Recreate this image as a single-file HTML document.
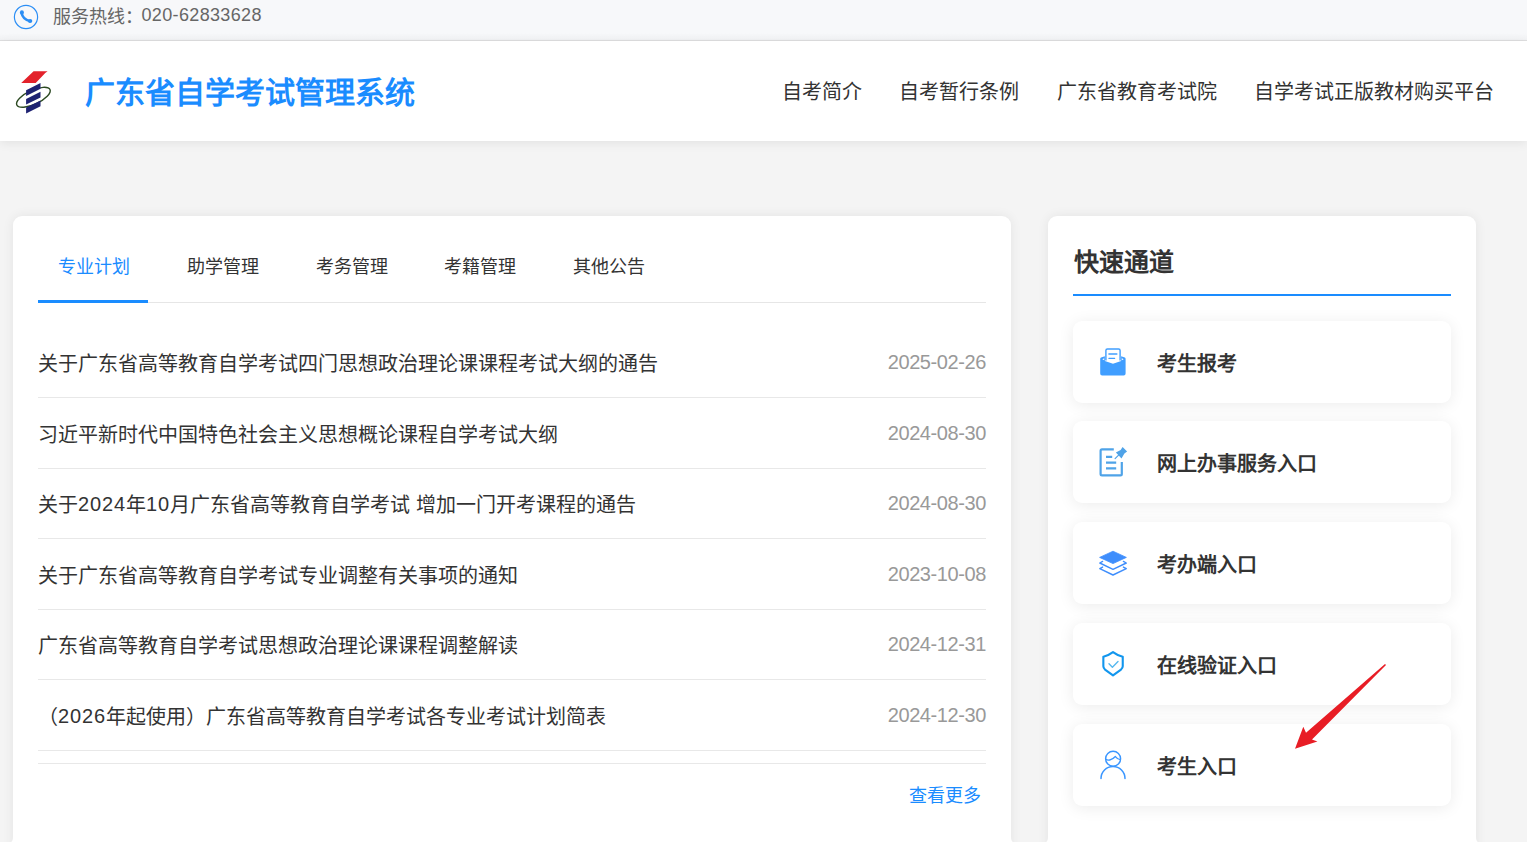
<!DOCTYPE html>
<html lang="zh-CN">
<head>
<meta charset="utf-8">
<style>
*{margin:0;padding:0;box-sizing:border-box}
html,body{width:1527px;height:842px;overflow:hidden}
body{font-family:"Liberation Sans",sans-serif;background:#f4f4f4;color:#333;position:relative}
.abs{position:absolute}
.ph{position:relative;top:-2px;letter-spacing:.35px;margin-left:-1.5px}
.dg{position:relative;top:-1px;letter-spacing:.9px}
#topbar{left:0;top:0;width:1527px;height:41px;background:linear-gradient(#f7f8fa 0,#f7f8fa 33px,#f3f4f6 39px,#f1f2f4 40px);border-bottom:1px solid #dfdfe0}
#topbar .txt{left:53px;top:6px;font-size:18px;line-height:22px;color:#666;white-space:nowrap}
#header{left:0;top:41px;width:1527px;height:100px;background:#fff;box-shadow:0 2px 10px rgba(0,0,0,.08)}
#title{left:85px;top:74px;font-size:30px;line-height:38px;font-weight:bold;color:#1a8cff;white-space:nowrap}
.nav{top:80px;font-size:20px;line-height:24px;color:#333;white-space:nowrap}
#card1{left:13px;top:216px;width:998px;height:700px;background:#fff;border-radius:9px;box-shadow:0 0 12px rgba(0,0,0,.07)}
#card2{left:1048px;top:216px;width:428px;height:700px;background:#fff;border-radius:9px;box-shadow:0 0 12px rgba(0,0,0,.07)}
.tab{top:256px;font-size:18px;line-height:22px;color:#333;white-space:nowrap}
.row{left:38px;width:948px;height:71px;border-bottom:1px solid #e8e8e8}
.row .t{position:absolute;left:0;top:25px;font-size:20px;line-height:24px;color:#333;white-space:nowrap}
.row .d{position:absolute;right:0;top:23px;font-size:20px;letter-spacing:-.4px;line-height:24px;color:#999;white-space:nowrap}
.qi{left:1073px;width:378px;height:82px;background:#fff;border-radius:9px;box-shadow:0 2px 16px rgba(0,0,0,.08)}
.qi .t{position:absolute;left:84px;top:31px;font-size:20px;line-height:24px;font-weight:bold;color:#333;white-space:nowrap}
.qi svg{position:absolute;left:20px;top:21px}
</style>
</head>
<body>
<div id="topbar" class="abs">
  <svg class="abs" style="left:0;top:0" width="50" height="40" viewBox="0 0 50 40">
    <circle cx="26" cy="17" r="11.6" fill="none" stroke="#2b8ef5" stroke-width="1.2"/>
    <path d="M21.6 12.8 Q22.4 18.8 29.8 21.1" fill="none" stroke="#2b8ef5" stroke-width="2.5" stroke-linecap="round"/>
    <ellipse cx="21.9" cy="12.5" rx="2" ry="2.2" fill="#2b8ef5"/>
    <ellipse cx="30.1" cy="21" rx="2.2" ry="1.9" fill="#2b8ef5"/>
  </svg>
  <div class="abs txt">服务热线：<span class="ph">020-62833628</span></div>
</div>
<div id="header" class="abs"></div>
<svg class="abs" style="left:0;top:60px" width="60" height="60" viewBox="0 60 60 60">
  <path d="M33.6 71.3 L47.6 71.3 Q44.8 72.8 43.6 74.8 L35.7 83 L21.2 83 Z" fill="#e3222b"/>
  <ellipse cx="33.4" cy="97.3" rx="18.3" ry="7" transform="rotate(-25 33.4 97.3)" fill="none" stroke="#2c4a22" stroke-width="1.4"/>
  <path d="M26.1 90.2 L40.5 83.1 L40.5 88.8 L26.1 95.9 Z M26.1 98.9 L40.5 91.8 L40.5 97.5 L26.1 104.6 Z M26.1 107.6 L40.5 100.5 L40.5 106.2 L26.1 113.6 Z" fill="#1e2272"/>
</svg>
<div id="title" class="abs">广东省自学考试管理系统</div>
<div class="abs nav" style="left:782px">自考简介</div>
<div class="abs nav" style="left:899px">自考暂行条例</div>
<div class="abs nav" style="left:1057px">广东省教育考试院</div>
<div class="abs nav" style="left:1254px">自学考试正版教材购买平台</div>

<div id="card1" class="abs"></div>
<div class="abs" style="left:38px;top:302px;width:948px;height:1px;background:#e6e6e6"></div>
<div class="abs" style="left:38px;top:300px;width:110px;height:3px;background:#1a8cff"></div>
<div class="abs tab" style="left:58px;color:#1a8cff">专业计划</div>
<div class="abs tab" style="left:187px">助学管理</div>
<div class="abs tab" style="left:316px">考务管理</div>
<div class="abs tab" style="left:444px">考籍管理</div>
<div class="abs tab" style="left:573px">其他公告</div>

<div class="abs row" style="top:327px"><span class="t">关于广东省高等教育自学考试四门思想政治理论课课程考试大纲的通告</span><span class="d">2025-02-26</span></div>
<div class="abs row" style="top:398px"><span class="t">习近平新时代中国特色社会主义思想概论课程自学考试大纲</span><span class="d">2024-08-30</span></div>
<div class="abs row" style="top:468px"><span class="t">关于<span class="dg">2024</span>年<span class="dg">10</span>月广东省高等教育自学考试 增加一门开考课程的通告</span><span class="d">2024-08-30</span></div>
<div class="abs row" style="top:539px"><span class="t">关于广东省高等教育自学考试专业调整有关事项的通知</span><span class="d">2023-10-08</span></div>
<div class="abs row" style="top:609px"><span class="t">广东省高等教育自学考试思想政治理论课课程调整解读</span><span class="d">2024-12-31</span></div>
<div class="abs row" style="top:680px"><span class="t">（<span class="dg">2026</span>年起使用）广东省高等教育自学考试各专业考试计划简表</span><span class="d">2024-12-30</span></div>
<div class="abs" style="left:38px;top:763px;width:948px;height:1px;background:#e8e8e8"></div>
<div class="abs" style="left:909px;top:785px;font-size:18px;line-height:22px;color:#1a8cff">查看更多</div>

<div id="card2" class="abs"></div>
<div class="abs" style="left:1074px;top:247px;font-size:25px;line-height:30px;font-weight:bold;color:#333">快速通道</div>
<div class="abs" style="left:1073px;top:294px;width:378px;height:2px;background:#1a8cff"></div>

<div class="abs qi" style="top:321px"><span class="t">考生报考</span></div>
<div class="abs qi" style="top:421px"><span class="t">网上办事服务入口</span></div>
<div class="abs qi" style="top:522px"><span class="t">考办端入口</span></div>
<div class="abs qi" style="top:623px"><span class="t">在线验证入口</span></div>
<div class="abs qi" style="top:724px"><span class="t">考生入口</span></div>

<svg class="abs" style="left:1090px;top:340px" width="50" height="45" viewBox="0 0 50 45">
  <path d="M15.9 20.5 V10.5 Q15.9 9 17.4 9 H28.6 Q30.1 9 30.1 10.5 V20.5" fill="#fff" stroke="#409eff" stroke-width="1.4"/>
  <path d="M19 14 H26.8" stroke="#409eff" stroke-width="1.6" stroke-linecap="round"/>
  <path d="M19 18.4 H24.6" stroke="#409eff" stroke-width="1.3" stroke-linecap="round"/>
  <path d="M10.2 18.9 Q10.2 17.9 11.1 17.6 L14.9 16.3 L14.9 20.9 L23 23.8 L31.1 20.9 L31.1 16.3 L34.8 17.6 Q35.6 17.9 35.6 18.9 L35.6 33.6 Q35.6 35.5 33.7 35.5 L12.1 35.5 Q10.2 35.5 10.2 33.6 Z" fill="#409eff"/>
  <path d="M12.3 19.2 L14.2 18.3 L14.2 20.3 Z M33.7 19.2 L31.8 18.3 L31.8 20.3 Z" fill="#fff"/>
</svg>
<svg class="abs" style="left:1090px;top:440px" width="50" height="45" viewBox="0 0 50 45">
  <path d="M23.8 9.3 H12 Q10.6 9.3 10.6 10.7 V34 Q10.6 35.4 12 35.4 H30.4 Q31.8 35.4 31.8 34 V21.9" fill="none" stroke="#4fa3e8" stroke-width="2.2"/>
  <path d="M16 16.8 H22.2 M16 22.7 H26.2 M16 28.3 H26.2" stroke="#4fa3e8" stroke-width="2.3"/>
  <path d="M32.6 6.9 L37.1 11.5 L34.4 13.6 L31.5 18.4 L25.9 12.6 L30.6 9.9 Z" fill="#4fa3e8"/>
  <path d="M25.1 18.7 L28.6 15.2" stroke="#4fa3e8" stroke-width="1.2" stroke-linecap="round"/>
</svg>
<svg class="abs" style="left:1090px;top:540px" width="50" height="45" viewBox="0 0 50 45">
  <path d="M9.6 17.4 L23 11.2 L36.4 17.4 L23 23.6 Z" fill="#3f8efc" stroke="#3f8efc" stroke-width="0.8" stroke-linejoin="round"/>
  <path d="M12.6 21.4 L9.8 23 L23 29.3 L36.3 23 L33.4 21.4 M12.6 27.1 L9.8 28.6 L23 35 L36.3 28.6 L33.4 27.1" fill="none" stroke="#3f8efc" stroke-width="1.4" stroke-linejoin="round" stroke-linecap="round"/>
</svg>
<svg class="abs" style="left:1090px;top:640px" width="50" height="45" viewBox="0 0 50 45">
  <path d="M23 12.1 C20.5 14 17 15.8 13.35 16.7 V26.3 Q13.35 28 15 29.6 L23 35.4 L31 29.6 Q32.75 28 32.75 26.3 V16.7 C29 15.8 25.5 14 23 12.1 Z" fill="none" stroke="#1296ee" stroke-width="2.1" stroke-linejoin="round"/>
  <path d="M19 23.8 L22.4 27.2 L28 21.6" fill="none" stroke="#56b8ef" stroke-width="1.4" stroke-linecap="round" stroke-linejoin="round"/>
</svg>
<svg class="abs" style="left:1090px;top:742px" width="50" height="45" viewBox="0 0 50 45">
  <circle cx="23.1" cy="16.8" r="7.5" fill="none" stroke="#3a96ff" stroke-width="1.4"/>
  <path d="M15.6 17.1 C17.5 18.6 21.5 18.8 25.4 14.6 C26.8 16.4 28.5 17.4 30.4 17.6" fill="none" stroke="#3a96ff" stroke-width="1.4" stroke-linejoin="round"/>
  <path d="M11 36.4 A12 12 0 0 1 35 36.4" fill="none" stroke="#3a96ff" stroke-width="1.5" stroke-linecap="round"/>
</svg>
<svg class="abs" style="left:1280px;top:650px" width="120" height="110" viewBox="1280 650 120 110">
  <path d="M1386 664.9 L1312 739.4 L1317.4 741.6 L1295 748.8 L1303.3 726.8 L1306 732.8 L1385 663.9 Z" fill="#e81d25"/>
</svg>

<svg class="abs" style="left:0;top:830px" width="1527" height="12" viewBox="0 830 1527 12">
  <path d="M13 836 Q13 842 10.5 842 L13 842 Z M1011 836 Q1011 842 1013.5 842 L1011 842 Z M1048 836 Q1048 842 1045.5 842 L1048 842 Z M1476 836 Q1476 842 1478.5 842 L1476 842 Z" fill="#fff"/>
</svg>
</body>
</html>
